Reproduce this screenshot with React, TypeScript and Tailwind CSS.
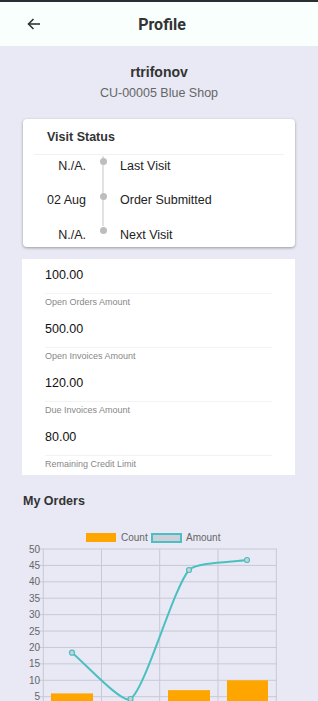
import React from 'react';

const visits = [
  { date: 'N./A.', label: 'Last Visit' },
  { date: '02 Aug', label: 'Order Submitted' },
  { date: 'N./A.', label: 'Next Visit' },
];

const amounts = [
  { value: '100.00', label: 'Open Orders Amount' },
  { value: '500.00', label: 'Open Invoices Amount' },
  { value: '120.00', label: 'Due Invoices Amount' },
  { value: '80.00', label: 'Remaining Credit Limit' },
];

// chart geometry (svg coordinates, chart top = 50 line)
const top = 24;
const unit = 3.282;
const yOf = (v: number) => top + (50 - v) * unit;
const ticks = [50, 45, 40, 35, 30, 25, 20, 15, 10, 5];
const cols = [43.3, 101.5, 159.7, 218, 276.3];
const bars = [
  { x: 51, w: 42, v: 6 },
  { x: 168, w: 42, v: 7 },
  { x: 227, w: 41, v: 10 },
];
const points = [
  [72, 127.7],
  [130.5, 174],
  [189, 45],
  [247, 35],
];

const OrdersChart = () => (
  <svg width="318" height="176" viewBox="0 0 318 176" className="block">
    {/* legend */}
    <rect x="86" y="8" width="30" height="9" fill="#ffa500" />
    <text x="121" y="16" fontSize="10" fill="#666" fontFamily="Liberation Sans, Arial, sans-serif">Count</text>
    <rect x="152" y="9" width="29" height="8" fill="#cdcfda" stroke="#4bc0c0" strokeWidth="2" />
    <text x="186" y="16" fontSize="10" fill="#666" fontFamily="Liberation Sans, Arial, sans-serif">Amount</text>

    {/* grid */}
    {ticks.map((t) => (
      <g key={t}>
        <line x1="38" x2="277" y1={yOf(t)} y2={yOf(t)} stroke="#c8c9d6" strokeWidth="1" />
        <text x="40" y={yOf(t) + 3.5} fontSize="10" textAnchor="end" fill="#666" fontFamily="Liberation Sans, Arial, sans-serif">
          {t}
        </text>
      </g>
    ))}
    {cols.map((c) => (
      <line key={c} x1={c} x2={c} y1={top} y2="176" stroke="#c8c9d6" strokeWidth="1" />
    ))}

    {/* bars */}
    {bars.map((b) => (
      <rect key={b.x} x={b.x} y={yOf(b.v)} width={b.w} height={176 - yOf(b.v)} fill="#ffa500" />
    ))}

    {/* line */}
    <path
      d="M72,127.7 C83.7,137 122.4,179.7 130.5,174 C145.8,163.2 172.6,64.6 189,45 C195.9,36.8 235.4,37 247,35"
      fill="none"
      stroke="#4bc0c0"
      strokeWidth="2"
    />
    {points.map(([x, y]) => (
      <circle key={x} cx={x} cy={y} r="2.5" fill="#cdcfda" stroke="#4bc0c0" strokeWidth="1.2" />
    ))}
  </svg>
);

export default function App() {
  return (
    <div className="w-[318px] h-[701px] overflow-hidden bg-[#e8e9f4] font-['Liberation_Sans',Arial,sans-serif]">
      <div className="h-[2px] bg-[#2b2e33]" />
      <div className="h-[44px] bg-[#f8fffd] flex items-center">
        <div className="w-[64px] pl-[27px] flex items-center">
          <svg width="14" height="12" viewBox="0 0 14 12" fill="none" stroke="#333" strokeWidth="1.6">
            <path d="M13 6H1.5" />
            <path d="M6.5 1L1.5 6l5 5" />
          </svg>
        </div>
        <div className="flex-1 text-center pr-[58px] pt-[2px] text-[16px] font-bold text-[#333] font-['Roboto',Arial,sans-serif]">
          Profile
        </div>
      </div>

      <div className="pt-[17px] text-center">
        <div className="text-[14px] font-bold text-[#333] leading-[18px]">rtrifonov</div>
        <div className="mt-[4px] text-[12.5px] text-[#666] leading-[16px]">CU-00005 Blue Shop</div>
      </div>

      <div className="mt-[18px] mx-[23px] bg-white rounded-[4px] shadow-[0_1px_3px_rgba(0,0,0,0.35)] pt-[10px] h-[128px] overflow-hidden">
        <div className="pl-[24px] text-[12.5px] font-bold text-[#333] leading-[16px]">Visit Status</div>
        <div className="mx-[11px] mt-[9px] border-t border-[#f1f1f4]" />
        <div className="relative -mt-[6px]">
          <div className="absolute left-[79px] top-[7px] h-[70px] w-[2px] bg-[#e2e2e2]" />
          {visits.map((v, i) => (
            <div key={i} className="flex items-center h-[34.5px] text-[12.5px] text-[#222]">
              <div className="w-[63px] text-right">{v.date}</div>
              <div className="w-[34px] flex justify-center -mt-[9px] relative">
                <div className="w-[7px] h-[7px] rounded-full bg-[#bdbdbd]" />
              </div>
              <div>{v.label}</div>
            </div>
          ))}
        </div>
      </div>

      <div className="mt-[12px] ml-[22px] mr-[23px] bg-white px-[23px] h-[216px]">
        {amounts.map((a) => (
          <div key={a.label} className="h-[54px] flex flex-col">
            <div className="h-[34px] pt-[8px] text-[12.5px] text-[#111] leading-[16px]">{a.value}</div>
            <div className="border-t border-[#f3f3f6]" />
            <div className="pt-[2px] text-[9px] text-[#888] leading-[12px]">{a.label}</div>
          </div>
        ))}
      </div>

      <div className="mt-[18px] pl-[23px] text-[12.5px] font-bold text-[#333] leading-[16px]">My Orders</div>
      <div className="mt-[16px]">
        <OrdersChart />
      </div>
    </div>
  );
}
